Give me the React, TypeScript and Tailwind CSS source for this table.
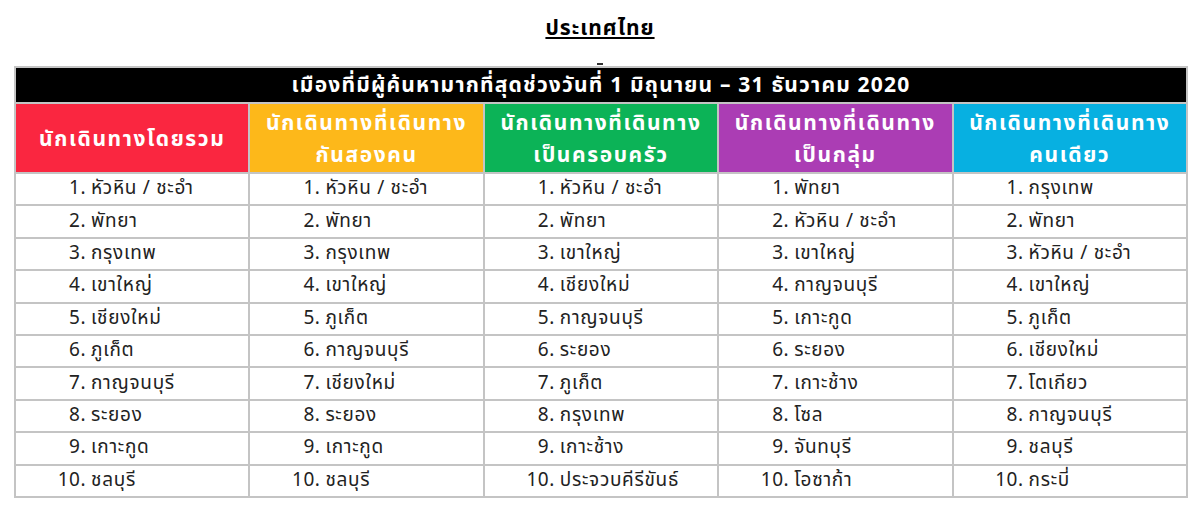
import React from "react";

const heads = [
  { lines: ["นักเดินทางโดยรวม"], bg: "bg-[#fa2640]" },
  { lines: ["นักเดินทางที่เดินทาง", "กันสองคน"], bg: "bg-[#fdb81a]" },
  { lines: ["นักเดินทางที่เดินทาง", "เป็นครอบครัว"], bg: "bg-[#0cb357]" },
  { lines: ["นักเดินทางที่เดินทาง", "เป็นกลุ่ม"], bg: "bg-[#ab3db4]" },
  { lines: ["นักเดินทางที่เดินทาง", "คนเดียว"], bg: "bg-[#07b0e1]" },
];

const cols: string[][] = [
  ["หัวหิน / ชะอำ", "พัทยา", "กรุงเทพ", "เขาใหญ่", "เชียงใหม่", "ภูเก็ต", "กาญจนบุรี", "ระยอง", "เกาะกูด", "ชลบุรี"],
  ["หัวหิน / ชะอำ", "พัทยา", "กรุงเทพ", "เขาใหญ่", "ภูเก็ต", "กาญจนบุรี", "เชียงใหม่", "ระยอง", "เกาะกูด", "ชลบุรี"],
  ["หัวหิน / ชะอำ", "พัทยา", "เขาใหญ่", "เชียงใหม่", "กาญจนบุรี", "ระยอง", "ภูเก็ต", "กรุงเทพ", "เกาะช้าง", "ประจวบคีรีขันธ์"],
  ["พัทยา", "หัวหิน / ชะอำ", "เขาใหญ่", "กาญจนบุรี", "เกาะกูด", "ระยอง", "เกาะช้าง", "โซล", "จันทบุรี", "โอซาก้า"],
  ["กรุงเทพ", "พัทยา", "หัวหิน / ชะอำ", "เขาใหญ่", "ภูเก็ต", "เชียงใหม่", "โตเกียว", "กาญจนบุรี", "ชลบุรี", "กระบี่"],
];

export default function App() {
  return (
    <div
      className="w-[1200px] h-[505px] bg-white text-[#222] overflow-hidden"
      style={{ fontFamily: "Tahoma, 'Noto Sans Thai', 'Noto Sans Thai UI', Loma, 'Noto Sans', 'DejaVu Sans', sans-serif" }}
    >
      <div className="h-[46px] pt-[16px] text-center">
        <span className="text-[21px] leading-[26px] font-bold underline underline-offset-2 tracking-[1px] text-black">ประเทศไทย</span>
      </div>
      <div className="h-[20px] flex justify-center items-end pb-[1px]">
        <div className="w-[6px] h-[2px] bg-[#333]" />
      </div>
      <table className="ml-[14px] w-[1174px] border-collapse table-fixed">
        <thead>
          <tr>
            <th colSpan={5} className="h-[36px] bg-black border-2 border-[#c4c4c4] text-white text-[21px] tracking-[1.2px] font-bold leading-[30px] pt-[2px] pb-0 px-0">
              เมืองที่มีผู้ค้นหามากที่สุดช่วงวันที่ 1 มิถุนายน – 31 ธันวาคม 2020
            </th>
          </tr>
          <tr>
            {heads.map((h, i) => (
              <th
                key={i}
                className={`${h.bg} h-[69px] border-2 border-[#c4c4c4] text-white text-[21px] tracking-[1.6px] font-bold leading-[32px] pt-[4px] pb-0 px-0 align-middle`}
              >
                {h.lines.map((l, j) => (
                  <div key={j} className="whitespace-nowrap">{l}</div>
                ))}
              </th>
            ))}
          </tr>
        </thead>
        <tbody>
          {Array.from({ length: 10 }).map((_, r) => (
            <tr key={r}>
              {cols.map((c, i) => (
                <td key={i} className="h-[32.4px] border-2 border-[#c4c4c4] p-0 text-[19px] leading-[28px]">
                  <div className="flex">
                    <span className="w-[70px] text-right shrink-0 tracking-[0.5px]">{r + 1}.</span>
                    <span className="pl-[5px] whitespace-nowrap tracking-[0.7px]">{c[r]}</span>
                  </div>
                </td>
              ))}
            </tr>
          ))}
        </tbody>
      </table>
    </div>
  );
}
